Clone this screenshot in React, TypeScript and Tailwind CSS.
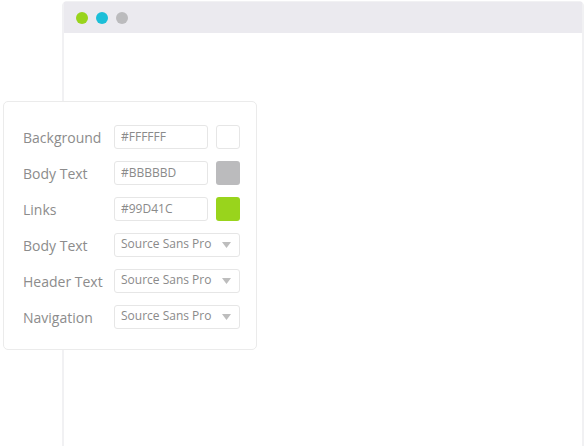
import React from "react";

const font = { fontFamily: '"Open Sans", "Noto Sans", sans-serif' };

function Caret() {
  return (
    <svg width="9" height="6" viewBox="0 0 9 6" className="shrink-0">
      <path d="M0 0 L9 0 L4.5 6 Z" fill="#bdbdbd" />
    </svg>
  );
}

function ColorRow({ label, value, swatch }: { label: string; value: string; swatch: string }) {
  return (
    <div className="flex items-center h-6">
      <div className="w-[91px] text-[14px] text-[#8c8c8c] leading-none mt-[2px]">{label}</div>
      <div className="w-[94px] h-6 border border-[#e6e6e6] rounded-[3px] flex items-center pl-[6px] text-[12px] text-[#8a8a8a]">
        {value}
      </div>
      <div
        className={`ml-2 w-6 h-6 rounded-[3px] ${swatch === "#FFFFFF" ? "border border-[#e6e6e6] bg-white" : ""}`}
        style={swatch === "#FFFFFF" ? undefined : { backgroundColor: swatch }}
      />
    </div>
  );
}

function SelectRow({ label }: { label: string }) {
  return (
    <div className="flex items-center h-6">
      <div className="w-[91px] text-[14px] text-[#8c8c8c] leading-none mt-[2px]">{label}</div>
      <div className="w-[126px] h-6 border border-[#e6e6e6] rounded-[3px] flex items-center justify-between pl-[6px] pr-[8px] text-[12px] text-[#8a8a8a]">
        <span className="-mt-[3px]">Source Sans Pro</span>
        <Caret />
      </div>
    </div>
  );
}

export default function App() {
  return (
    <div className="relative w-[587px] h-[446px] bg-white overflow-hidden" style={font}>
      <div className="ml-[62px] mt-px w-[522px] h-[460px] border-2 border-[#f1f1f3] rounded-t-[5px] bg-white">
        <div className="h-[31px] bg-[#ebeaef] flex items-center gap-2 pl-3 -mt-px">
          <div className="w-3 h-3 rounded-full bg-[#99d41c]" />
          <div className="w-3 h-3 rounded-full bg-[#1cbfd8]" />
          <div className="w-3 h-3 rounded-full bg-[#bbbbbd]" />
        </div>
      </div>
      <div className="absolute left-[3px] top-[101px] w-[254px] h-[249px] bg-white border border-[#ebebeb] rounded-[5px] pl-[19px] pt-[23px] flex flex-col gap-3">
        <ColorRow label="Background" value="#FFFFFF" swatch="#FFFFFF" />
        <ColorRow label="Body Text" value="#BBBBBD" swatch="#BBBBBD" />
        <ColorRow label="Links" value="#99D41C" swatch="#99D41C" />
        <SelectRow label="Body Text" />
        <SelectRow label="Header Text" />
        <SelectRow label="Navigation" />
      </div>
    </div>
  );
}
